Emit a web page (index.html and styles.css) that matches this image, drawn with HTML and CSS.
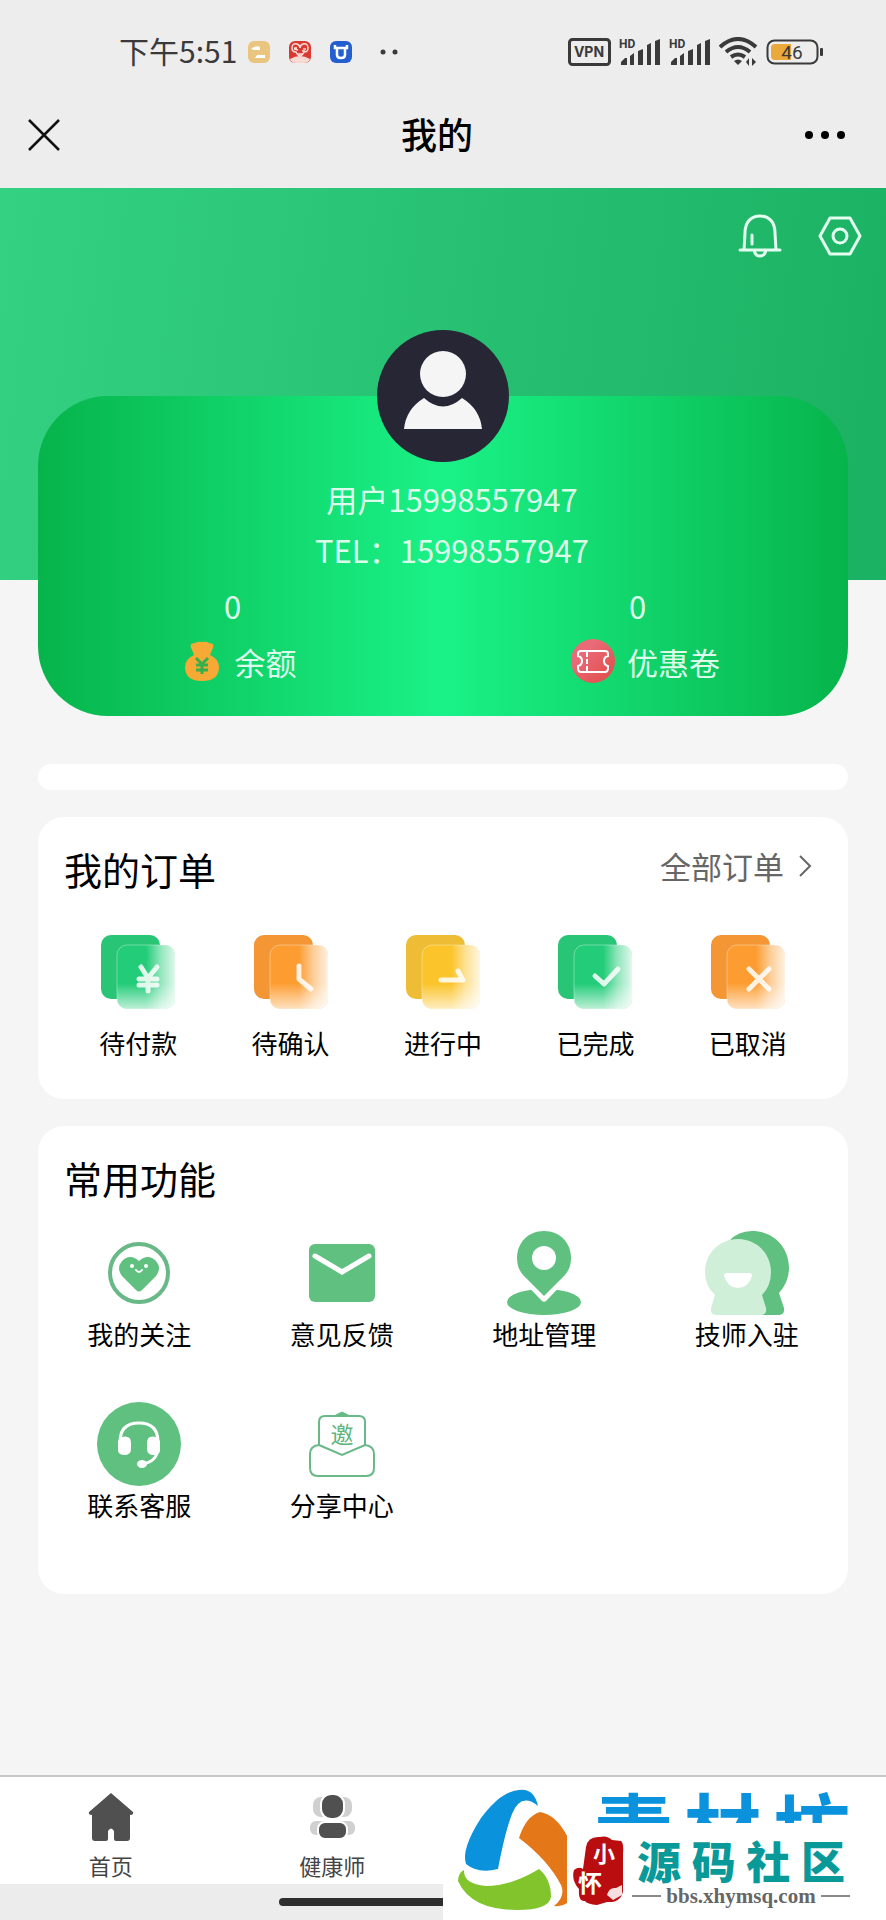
FILE: index.html
```
<!DOCTYPE html>
<html lang="zh-CN">
  <head>
    <meta charset="UTF-8" />
    <meta name="viewport" content="width=device-width, initial-scale=1.0" />
    <title>我的</title>
    <link rel="stylesheet" href="styles.css" />
  </head>
  <body>
    <!-- 公用渐变和图形 -->
    <svg class="defs" width="0" height="0" aria-hidden="true">
      <defs>
        <linearGradient id="fadeRight">
          <stop offset="0.5" stop-color="#fff" stop-opacity="0" />
          <stop offset="0.75" stop-color="#fff" stop-opacity="0.5" />
          <stop offset="1" stop-color="#fff" stop-opacity="0.85" />
        </linearGradient>
        <linearGradient id="fadeDown" x1="0" y1="0" x2="0" y2="1">
          <stop offset="0.6" stop-color="#fff" stop-opacity="0" />
          <stop offset="0.85" stop-color="#fff" stop-opacity="0.45" />
          <stop offset="1" stop-color="#fff" stop-opacity="0.7" />
        </linearGradient>
        <linearGradient id="coupon" x1="0" y1="0" x2="1" y2="1">
          <stop offset="0.3" stop-color="#ea6a78" />
          <stop offset="1" stop-color="#e04a44" />
        </linearGradient>
      </defs>
      <symbol id="plate" viewBox="0 0 84 84">
        <rect class="plate-back" x="5" y="4" width="59" height="64" rx="10" />
        <rect class="plate-front" x="21" y="14" width="58" height="64" rx="10" />
        <rect x="21" y="14" width="58" height="64" rx="10" fill="url(#fadeRight)" />
        <rect x="21" y="14" width="58" height="64" rx="10" fill="url(#fadeDown)" />
        <rect x="21" y="14" width="58" height="64" rx="10" fill="none" stroke="#fff" stroke-opacity="0.35" />
      </symbol>
      <symbol id="signal" viewBox="0 0 42 28">
        <path d="M2 27v-3l4-4h2v7zM11 27v-9l4-3v12zM19 27V13l5-2v16zM28 27V7l4-2v22zM36 27V3l5-2v26z" />
      </symbol>
    </svg>

    <!-- 系统状态栏 -->
    <div class="status">
      <span class="time">下午5:51</span>
      <div class="status-apps">
        <svg width="22" height="22" viewBox="0 0 22 22">
          <rect width="22" height="22" rx="6" fill="#e9c57f" />
          <path d="M3 8Q7 4 12 6v3H6zM9 14h8v3H7z" fill="#fff" />
        </svg>
        <svg width="22" height="22" viewBox="0 0 22 22">
          <rect width="22" height="22" rx="6" fill="#d93a31" />
          <path d="M1 18q10-6 20 0-1 4-6 4H7q-5 0-6-4z" fill="#f6d9d3" />
          <path d="M3 7q0-5 5-4 3 1 3 4 0-3 3-4 5-1 5 4 0 4-4 4-2 4-4 4t-4-4q-4 0-4-4zM5 7h3m1 2l-4-1m9 0h3m-4 2h3M9 13h4M7 19h8" fill="none" stroke="#fbdcd6" stroke-width="1.5" />
        </svg>
        <svg width="22" height="22" viewBox="0 0 22 22">
          <rect width="22" height="22" rx="6" fill="#245fd0" />
          <path d="M5 4v3h12V4M7 7v7q0 3 4 3t4-3V7" fill="none" stroke="#fff" stroke-width="2.5" />
        </svg>
      </div>
      <svg class="more-apps" width="18" height="6" viewBox="0 0 18 6">
        <circle cx="3" cy="3" r="2.5" /><circle cx="15" cy="3" r="2.5" />
      </svg>
      <div class="status-right">
        <svg width="43" height="28" viewBox="0 0 43 28">
          <rect x="1.5" y="1.5" width="40" height="25" rx="3" fill="none" stroke="#3a3a3a" stroke-width="3" />
          <text x="21" y="19" text-anchor="middle" font-size="14" font-weight="700" font-family="Inter, sans-serif">VPN</text>
        </svg>
        <svg width="42" height="28" viewBox="0 0 42 28">
          <text x="0" y="10" font-size="12" font-weight="700" font-family="Roboto, sans-serif">HD</text>
          <use href="#signal" />
        </svg>
        <svg width="42" height="28" viewBox="0 0 42 28">
          <text x="0" y="10" font-size="12" font-weight="700" font-family="Roboto, sans-serif">HD</text>
          <use href="#signal" />
        </svg>
        <svg width="39" height="30" viewBox="0 0 39 30">
          <path d="M1 10Q19-6 37 10M7 15q12-10 24 0M12 20q7-5 14 0" fill="none" stroke="#3a3a3a" stroke-width="4" />
          <path d="M15 24q4-3 8 0l-4 4zM30 21v8l-3-4M33 29v-8l4 4" />
        </svg>
        <svg width="58" height="26" viewBox="0 0 58 26">
          <rect x="1.5" y="1.5" width="50" height="23" rx="7" fill="none" stroke="#3a3a3a" stroke-width="2" />
          <path d="M9 5h16v16H9q-4 0-4-4V9q0-4 4-4z" fill="#eba93c" />
          <rect x="54" y="9" width="3" height="8" rx="1" />
          <text x="26" y="20" text-anchor="middle" font-size="19" font-family="Roboto, sans-serif">46</text>
        </svg>
      </div>
    </div>

    <!-- 导航栏 -->
    <header class="navbar">
      <button class="icon-btn" type="button" aria-label="关闭">
        <svg width="32" height="32" viewBox="0 0 32 32">
          <path d="M1 1l30 30M31 1L1 31" fill="none" stroke="#111" stroke-width="2.5" />
        </svg>
      </button>
      <h1 class="nav-title">我的</h1>
      <button class="icon-btn nav-more" type="button" aria-label="更多">
        <svg width="42" height="10" viewBox="0 0 42 10">
          <circle cx="5" cy="5" r="4" /><circle cx="21" cy="5" r="4" /><circle cx="37" cy="5" r="4" />
        </svg>
      </button>
    </header>

    <main class="main">
      <!-- 个人信息 -->
      <section class="profile">
        <div class="actions">
          <button class="icon-btn" type="button" aria-label="消息">
            <svg width="44" height="48" viewBox="0 0 44 48">
              <g fill="none" stroke="#e2fff0" stroke-width="3" stroke-linecap="round">
                <path d="M6 38l1-17C7 10 13 4 22 4s15 6 15 17l1 17M2 38h40M16 38q1 6 6 6t6-6M14 23v9" />
              </g>
            </svg>
          </button>
          <button class="icon-btn" type="button" aria-label="设置">
            <svg width="44" height="48" viewBox="0 0 44 48">
              <g fill="none" stroke="#e2fff0" stroke-width="3" stroke-linejoin="round">
                <path d="M12 6h20l10 18-10 18H12L2 24z" />
                <circle cx="22" cy="24" r="7" />
              </g>
            </svg>
          </button>
        </div>
        <div class="user-card">
          <svg class="avatar" width="132" height="132" viewBox="0 0 132 132">
            <circle cx="66" cy="66" r="66" fill="#272635" />
            <circle cx="66" cy="44" r="23" fill="#f5f5f5" />
            <path d="M27 99q2-20 20-31 19 17 38 0 18 11 20 31z" fill="#f5f5f5" />
          </svg>
          <p class="user-line">用户15998557947</p>
          <p class="user-line">TEL：15998557947</p>
          <div class="stats">
            <a class="stat" href="#">
              <span class="stat-num">0</span>
              <span class="stat-label stat-money">
                <svg width="34" height="42" viewBox="0 0 34 42">
                  <path d="M7 10Q3 3 10 3q3-2 7-1 4-1 7 1 7 0 3 7l-2 5q9 4 9 12 0 14-17 14T0 27q0-8 9-12z" fill="#f7a935" />
                  <path d="M11 18l6 6 6-6M11 25h12M11 30h12M17 25v9" fill="none" stroke="#35b04a" stroke-width="3" />
                </svg>
                余额
              </span>
            </a>
            <a class="stat" href="#">
              <span class="stat-num">0</span>
              <span class="stat-label">
                <svg width="44" height="44" viewBox="0 0 44 44">
                  <circle cx="22" cy="22" r="22" fill="url(#coupon)" />
                  <path d="M10 12h24q3 0 3 3v2q-4 1-4 5t4 5v2q0 4-3 4H10q-3 0-3-4v-2q4-1 4-5t-4-5v-2q0-3 3-3z" fill="none" stroke="#fff" stroke-width="2" />
                  <path d="M16 13v20" fill="none" stroke="#fff" stroke-width="2" stroke-dasharray="5 2" />
                </svg>
                优惠卷
              </span>
            </a>
          </div>
        </div>
      </section>

      <div class="notice"></div>

      <!-- 我的订单 -->
      <section class="panel">
        <div class="panel-head">
          <h2 class="panel-title">我的订单</h2>
          <a class="all-orders" href="#">
            全部订单
            <svg width="14" height="24" viewBox="0 0 14 24">
              <path d="M2 2l10 10L2 22" fill="none" stroke="#666" stroke-width="2" />
            </svg>
          </a>
        </div>
        <div class="orders">
          <a class="entry green" href="#">
            <svg width="84" height="84" viewBox="0 0 84 84">
              <use href="#plate" />
              <path class="mark" d="M45 36l7 11 9-11M43 48h18M43 54h18M52 47v13" />
            </svg>
            待付款
          </a>
          <a class="entry orange" href="#">
            <svg width="84" height="84" viewBox="0 0 84 84">
              <use href="#plate" />
              <path class="mark" d="M50 35v13l12 10" />
            </svg>
            待确认
          </a>
          <a class="entry yellow" href="#">
            <svg width="84" height="84" viewBox="0 0 84 84">
              <use href="#plate" />
              <path class="mark" d="M40 49h22l-5-9" />
            </svg>
            进行中
          </a>
          <a class="entry green" href="#">
            <svg width="84" height="84" viewBox="0 0 84 84">
              <use href="#plate" />
              <path class="mark" d="M42 45l9 8 14-15" />
            </svg>
            已完成
          </a>
          <a class="entry orange" href="#">
            <svg width="84" height="84" viewBox="0 0 84 84">
              <use href="#plate" />
              <path class="mark" d="M43 38l20 20M63 38L43 58" />
            </svg>
            已取消
          </a>
        </div>
      </section>

      <!-- 常用功能 -->
      <section class="panel">
        <div class="panel-head">
          <h2 class="panel-title">常用功能</h2>
        </div>
        <div class="tools">
          <a class="entry" href="#">
            <svg width="84" height="84" viewBox="0 0 84 84" fill="#5fc07f">
              <circle cx="42" cy="42" r="29" fill="none" stroke="#68b987" stroke-width="4" />
              <path d="M42 30q9-8 17 0 6 7 0 15L45 59q-3 3-6 0L25 45q-6-8 0-15 8-8 17 0z" />
              <circle cx="35" cy="35" r="2" fill="#fff" /><circle cx="49" cy="35" r="2" fill="#fff" />
              <path d="M39 39q3 4 6 0" fill="none" stroke="#fff" stroke-width="2" stroke-linecap="round" />
            </svg>
            我的关注
          </a>
          <a class="entry" href="#">
            <svg width="84" height="84" viewBox="0 0 84 84">
              <rect x="9" y="13" width="66" height="58" rx="6" fill="#5fc07f" />
              <path d="M15 25l27 16 27-16" fill="none" stroke="#fff" stroke-width="5" stroke-linecap="round" />
            </svg>
            意见反馈
          </a>
          <a class="entry" href="#">
            <svg width="84" height="84" viewBox="0 0 84 84" fill="#5fc07f">
              <ellipse cx="42" cy="71" rx="37" ry="13" />
              <path d="M42 67L22 46Q15 38 15 27 17 2 42 0q25 2 27 27 0 11-7 19z" stroke="#fff" stroke-width="7" stroke-linejoin="round" />
              <path d="M42 65L22 45Q15 38 15 27C15 11 27 0 42 0s27 11 27 27q0 11-7 18z" />
              <circle cx="42" cy="27" r="12" fill="#fff" />
            </svg>
            地址管理
          </a>
          <a class="entry" href="#">
            <svg width="84" height="84" viewBox="0 0 84 84">
              <path d="M24 10Q33 0 47 0C68 0 84 16 84 37q0 14-10 25l5 15q1 7-5 7H46z" fill="#5fc07f" />
              <path d="M33 8c19 0 33 15 33 33q0 14-9 23l4 13q1 7-5 7H11q-6 0-5-7l4-13Q0 55 0 41C0 23 14 8 33 8z" fill="#d0efd8" />
              <path d="M22 42h22q3 0 3 3-4 12-14 12T19 45q0-3 3-3z" fill="#fff" />
            </svg>
            技师入驻
          </a>
          <a class="entry" href="#">
            <svg width="84" height="84" viewBox="0 0 84 84">
              <circle cx="42" cy="42" r="42" fill="#5fc07f" />
              <path d="M23 40q0-19 19-19t19 19v6q-1 14-16 16" fill="none" stroke="#fff" stroke-width="3" />
              <path d="M25 35q9-2 9 6v6q0 6-7 6t-6-7v-7zM59 35q-9-2-9 6v6q0 6 7 6t6-7v-7z" fill="#fff" />
              <ellipse cx="45" cy="62" rx="5" ry="4" fill="#fff" />
            </svg>
            联系客服
          </a>
          <a class="entry" href="#">
            <svg width="84" height="84" viewBox="0 0 84 84">
              <path d="M34 14l8-4 8 4z" fill="#5fc07f" stroke="#68b987" />
              <path d="M19 44V20q0-6 6-6h34q6 0 6 6v24M19 43l23 10 23-10q9 1 9 9v14q0 8-8 8H18q-8 0-8-8V52q0-8 9-9z" fill="none" stroke="#68b987" stroke-width="2" />
              <text x="42" y="41" text-anchor="middle" font-size="23" fill="#5fb57e" font-family="Noto Sans CJK SC, sans-serif">邀</text>
            </svg>
            分享中心
          </a>
        </div>
      </section>
    </main>

    <!-- 底部标签栏 -->
    <footer class="footer">
      <nav class="tabs">
        <a class="tab" href="#">
          <svg width="48" height="48" viewBox="0 0 48 48">
            <path d="M24 0l22 19q1 3-3 3v23q0 3-3 3H29q-2 0-2-2v-8q-3-5-6 0v8q0 2-2 2H8q-3 0-3-3V22q-4 0-3-3z" fill="#505050" />
          </svg>
          首页
        </a>
        <a class="tab" href="#">
          <svg width="48" height="48" viewBox="0 0 48 48">
            <g fill="#d0d0d0">
              <rect x="5" y="4" width="18" height="20" rx="8" /><rect x="26" y="4" width="18" height="20" rx="8" />
              <rect x="2" y="28" width="20" height="14" rx="6" /><rect x="27" y="28" width="20" height="14" rx="6" />
            </g>
            <g fill="#505050" stroke="#fff" stroke-width="2">
              <rect x="13" y="1" width="23" height="25" rx="10" />
              <rect x="10" y="29" width="29" height="17" rx="7" />
            </g>
          </svg>
          健康师
        </a>
      </nav>
      <div class="gesture"><span class="gesture-bar"></span></div>
    </footer>

    <!-- 右下角水印 -->
    <div class="watermark">
      <svg class="wm-logo" width="124" height="143" viewBox="0 0 124 143">
        <path d="M76 13q15-2 19 16-17-14-26 8-7 18-14 55-20 5-32-5Q18 72 38 41 58 14 76 13z" fill="#0a92dc" />
        <path d="M76 61q7-22 21-26 18 3 30 30v58q-5 7-16 6 12-10 7-21Q105 83 76 61z" fill="#e47717" />
        <path d="M21 93q-1 14 22 16 25 0 53-17 12 10 12 28-2 13-34 13-46 0-59-29 0-8 6-11z" fill="#82c42b" />
      </svg>
      <div class="wm-name"><span>素</span><span>材</span><span>坊</span></div>
      <div class="wm-badge">
        <svg width="52" height="72" viewBox="0 0 52 72">
          <path d="M13 12q2-11 14-10 7-2 12 3l9 1q3 3 2 12v38q-2 12-16 11l-10 3q-10-1-12-4-7 1-6-12-8-9-5-19 5-4 9-1z" fill="#b90d10" />
          <g fill="#fff" font-family="Noto Sans CJK SC, sans-serif" font-weight="700">
            <text x="20" y="27" font-size="22">小</text>
            <text x="5" y="57" font-size="24">怀</text>
          </g>
          <path d="M34 60q2-8 9-7l6-3v10l-9 5z" fill="#f7dede" />
        </svg>
        <div class="wm-text">
          <div class="wm-site"><span>源</span><span>码</span><span>社</span><span>区</span></div>
          <div class="wm-url">bbs.xhymsq.com</div>
        </div>
      </div>
    </div>
  </body>
</html>
```
FILE: styles.css
```
* {
  margin: 0;
  padding: 0;
  box-sizing: border-box;
}

body {
  display: flex;
  flex-direction: column;
  min-height: 100vh;
  background-color: #f5f5f5;
  color: #000;
  font-family: "Noto Sans CJK SC", sans-serif;
  font-weight: 400;
}

a {
  color: inherit;
  text-decoration: none;
}

svg {
  display: block;
  flex: none;
}

.defs {
  position: absolute;
}

.icon-btn {
  border: 0;
  background: none;
  cursor: pointer;
}

/* 状态栏 */
.status {
  display: flex;
  align-items: center;
  height: 88px;
  padding: 16px 62px 0 119px;
  background-color: #ededed;
  color: #3a3a3a;
  fill: #3a3a3a;
}
.time {
  padding-bottom: 4px;
  font-size: 30px;
  line-height: 40px;
}
.status-apps {
  display: flex;
  gap: 19px;
  margin-left: 11px;
}
.more-apps {
  margin-left: 28px;
}
.status-right {
  display: flex;
  align-items: center;
  gap: 8px;
  margin-left: auto;
}

/* 导航栏 */
.navbar {
  display: grid;
  grid-template-columns: 1fr auto 1fr;
  align-items: center;
  justify-items: start;
  height: 100px;
  padding: 0 40px 6px 28px;
  background-color: #ededed;
}
.nav-title {
  padding-bottom: 4px;
  font-size: 36px;
  font-weight: 500;
  line-height: 50px;
}
.nav-more {
  justify-self: end;
}

.main {
  flex: 1;
}

/* 个人信息 */
.profile {
  padding: 24px 38px 0;
  background: linear-gradient(97deg, #34d182, #1bb163) no-repeat;
  background-size: 100% 392px;
}
.actions {
  display: flex;
  justify-content: flex-end;
  gap: 36px;
  margin-right: -14px;
}
.user-card {
  display: flex;
  flex-direction: column;
  margin-top: 136px;
  padding-bottom: 33px;
  border-radius: 70px;
  background: linear-gradient(90deg, #06b44b, #1af287 50%, #06b44b);
  color: #dcfdea;
  font-size: 31px;
}
.avatar {
  margin: -66px auto 11px;
}
.user-line {
  padding-left: 18px;
  line-height: 51px;
  text-align: center;
}
.stats {
  display: grid;
  grid-template-columns: 1fr 1fr;
  margin-top: 9px;
}
.stat {
  display: flex;
  flex-direction: column;
  align-items: center;
  gap: 11px;
}
.stat-num {
  padding-right: 16px;
  line-height: 44px;
}
.stat-label {
  display: flex;
  align-items: center;
  gap: 12px;
  height: 44px;
}
.stat-money {
  gap: 16px;
}

.notice {
  height: 26px;
  margin: 48px 38px 0;
  border-radius: 13px;
  background-color: #fff;
}

/* 白色卡片 */
.panel {
  margin: 27px 38px 0;
  padding: 24px 0 0;
  border-radius: 26px;
  background-color: #fff;
}
.panel-head {
  display: flex;
  justify-content: space-between;
  align-items: flex-start;
  padding: 0 36px 0 26px;
}
.panel-title {
  font-size: 38px;
  font-weight: 400;
  line-height: 56px;
}
.all-orders {
  display: flex;
  align-items: center;
  gap: 14px;
  color: #666;
  font-size: 31px;
  line-height: 50px;
}
.orders {
  display: grid;
  grid-template-columns: repeat(5, 1fr);
  padding: 34px 24px 38px;
}
.tools {
  display: grid;
  grid-template-columns: repeat(4, 1fr);
  row-gap: 50px;
  padding: 25px 0 71px;
}
.entry {
  display: flex;
  flex-direction: column;
  align-items: center;
  gap: 10px;
  font-size: 26px;
  line-height: 36px;
}
.tools .entry {
  gap: 1px;
}

/* 订单图标颜色 */
.plate-back {
  fill: var(--back);
}
.plate-front {
  fill: var(--front);
}
.mark {
  fill: none;
  stroke: #fff;
  stroke-opacity: 0.85;
  stroke-width: 5;
  stroke-linecap: round;
  stroke-linejoin: round;
}
.green {
  --back: #29c576;
  --front: #22cc78;
}
.orange {
  --back: #f39633;
  --front: #fd9d31;
}
.yellow {
  --back: #efbc35;
  --front: #fbc42a;
}

/* 底部 */
.tabs {
  display: grid;
  grid-template-columns: repeat(4, 1fr);
  border-top: 2px solid #c8c8c8;
  background-color: #fff;
}
.tab {
  display: flex;
  flex-direction: column;
  align-items: center;
  gap: 11px;
  padding: 16px 0 6px;
  color: #444;
  font-size: 22px;
  line-height: 26px;
}
.gesture {
  display: flex;
  justify-content: center;
  align-items: center;
  height: 36px;
  background-color: #ececec;
}
.gesture-bar {
  width: 37%;
  height: 8px;
  border-radius: 4px;
  background-color: #2e2e2e;
}

/* 水印 */
.watermark {
  position: fixed;
  right: 0;
  bottom: 0;
  display: grid;
  grid-template-columns: 124px 1fr;
  grid-template-rows: 46px 97px;
  width: 50%;
  background-color: #fff;
}
.wm-logo {
  grid-row: 1 / 3;
}
.wm-name {
  display: flex;
  gap: 12px;
  padding-left: 28px;
  overflow: hidden;
  color: #0a92dc;
  font-size: 77px;
  font-weight: 700;
  line-height: 98px;
}
.wm-badge {
  display: flex;
  gap: 7px;
  padding: 12px 36px 0 6px;
}
.wm-text {
  flex: 1;
}
.wm-site {
  display: flex;
  justify-content: space-between;
  padding: 0 5px;
  color: #0a9999;
  font-size: 44px;
  font-weight: 900;
  line-height: 50px;
}
.wm-url {
  display: flex;
  align-items: center;
  gap: 5px;
  color: #666;
  font-family: "Liberation Serif", serif;
  font-size: 21px;
  font-weight: 700;
  line-height: 22px;
}
.wm-url::before,
.wm-url::after {
  content: "";
  flex: 1;
  height: 2px;
  background-color: #888;
}
```
